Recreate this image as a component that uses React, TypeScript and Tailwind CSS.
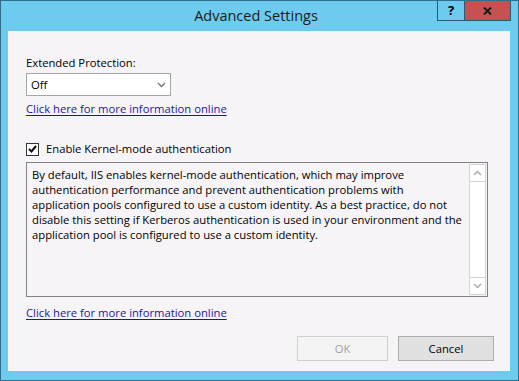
import React from "react";

function Chevron({ dir, className }: { dir: "up" | "down"; className?: string }) {
  return (
    <svg width="9" height="6" viewBox="0 0 9 6" className={className}>
      {dir === "down" ? (
        <path d="M1 1 L4.5 4.5 L8 1" fill="none" stroke="currentColor" strokeWidth="1.3" />
      ) : (
        <path d="M1 5 L4.5 1.5 L8 5" fill="none" stroke="currentColor" strokeWidth="1.3" />
      )}
    </svg>
  );
}

const lines = [
  "By default, IIS enables kernel-mode authentication, which may improve",
  "authentication performance and prevent authentication problems with",
  "application pools configured to use a custom identity. As a best practice, do not",
  "disable this setting if Kerberos authentication is used in your environment and the",
  "application pool is configured to use a custom identity.",
];

export default function App() {
  return (
    <div className="w-[519px] h-[381px] bg-[#6ccbee] border border-[#2f6f8e] flex flex-col font-['Open_Sans',sans-serif] text-black overflow-hidden">
      {/* Title bar */}
      <div className="h-[30px] flex">
        <div className="flex-1" />
        <div className="self-center text-[14.5px] leading-[20px] text-[#1b1b1b] whitespace-nowrap">
          Advanced Settings
        </div>
        <div className="flex-1 flex justify-end pr-[7px]">
          <div className="flex h-[20px] border-l border-r border-b border-[#2c5a70]">
            <div className="w-[27px] flex items-center justify-center border-r border-[#2c5a70] text-[13px] font-bold leading-none">
              ?
            </div>
            <div className="w-[45px] bg-[#c75050] flex items-center justify-center">
              <svg width="9" height="8" viewBox="0 0 9 8">
                <path d="M1 0.5 L8 7.5 M8 0.5 L1 7.5" stroke="#1a1a1a" strokeWidth="2" />
              </svg>
            </div>
          </div>
        </div>
      </div>

      {/* Client area */}
      <div className="ml-[7px] mr-[8px] h-[340px] bg-[#f7f4f7] flex flex-col pl-[18px] pr-[16px] text-[11.25px] leading-[16px]">
        <div className="mt-[24px] whitespace-nowrap">Extended Protection:</div>
        <div className="mt-[2px] w-[145px] h-[23px] bg-white border border-[#a5a5a5] flex items-center pl-[4px] pr-[4px]">
          <span className="flex-1">Off</span>
          <Chevron dir="down" className="text-[#707070]" />
        </div>
        <div className="mt-[5px] self-start whitespace-nowrap text-[#1717a8] underline underline-offset-[2px]">
          Click here for more information online
        </div>

        <div className="mt-[24px] flex items-center gap-[7px]">
          <div className="w-[13px] h-[13px] bg-white border border-[#333333] flex items-center justify-center">
            <svg width="9" height="8" viewBox="0 0 9 8">
              <path d="M1 4 L3.5 6.5 L8 1" fill="none" stroke="#111" strokeWidth="2" />
            </svg>
          </div>
          <span className="whitespace-nowrap">Enable Kernel-mode authentication</span>
        </div>

        <div className="mt-[5px] w-[462px] h-[135px] border border-[#828282] bg-[#f7f4f7] flex">
          <div className="flex-1 pl-[5px] pt-[4px] leading-[15px] whitespace-nowrap overflow-hidden">
            {lines.map((l) => (
              <div key={l}>{l}</div>
            ))}
          </div>
          <div className="w-[17px] my-[1px] mr-[1px] bg-white border border-[#d4d4d4] flex flex-col justify-between">
            <div className="h-[17px] border-b border-[#d4d4d4] flex items-center justify-center text-[#a6a6a6]">
              <Chevron dir="up" />
            </div>
            <div className="h-[17px] border-t border-[#d4d4d4] flex items-center justify-center text-[#a6a6a6]">
              <Chevron dir="down" />
            </div>
          </div>
        </div>

        <div className="mt-[8px] self-start whitespace-nowrap text-[#1717a8] underline underline-offset-[2px]">
          Click here for more information online
        </div>

        <div className="mt-[15px] flex justify-end gap-[10px]">
          <div className="w-[91px] h-[25px] border border-[#cfcfcf] bg-[#f4f4f4] text-[#a3a3a3] flex items-center justify-center">
            OK
          </div>
          <div className="w-[96px] h-[25px] border border-[#adadad] bg-[#e1e1e1] flex items-center justify-center">
            Cancel
          </div>
        </div>
      </div>
    </div>
  );
}
